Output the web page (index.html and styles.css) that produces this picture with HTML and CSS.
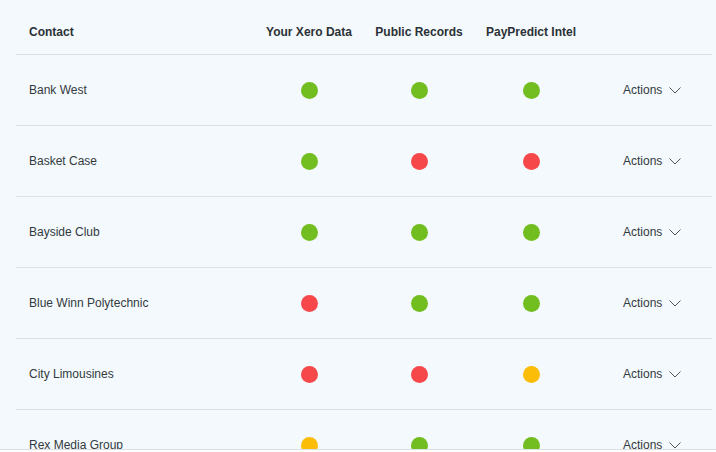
FILE: index.html
```html
<!DOCTYPE html>
<html>
<head>
<meta charset="utf-8">
<link rel="stylesheet" href="styles.css">
</head>
<body>
<div class="frame">
  <div class="table">
    <div class="row head">
      <div class="c-name">Contact</div>
      <div class="c-dot">Your Xero Data</div>
      <div class="c-dot">Public Records</div>
      <div class="c-dot">PayPredict Intel</div>
      <div class="c-act"></div>
    </div>
    <div class="row">
      <div class="c-name">Bank West</div>
      <div class="c-dot"><span class="dot green"></span></div>
      <div class="c-dot"><span class="dot green"></span></div>
      <div class="c-dot"><span class="dot green"></span></div>
      <div class="c-act">Actions <svg class="chev" viewBox="0 0 12 7" width="12" height="7"><path d="M0.5 0.5 L6 6 L11.5 0.5" fill="none" stroke="#555" stroke-width="1"/></svg></div>
    </div>
    <div class="row">
      <div class="c-name">Basket Case</div>
      <div class="c-dot"><span class="dot green"></span></div>
      <div class="c-dot"><span class="dot red"></span></div>
      <div class="c-dot"><span class="dot red"></span></div>
      <div class="c-act">Actions <svg class="chev" viewBox="0 0 12 7" width="12" height="7"><path d="M0.5 0.5 L6 6 L11.5 0.5" fill="none" stroke="#555" stroke-width="1"/></svg></div>
    </div>
    <div class="row">
      <div class="c-name">Bayside Club</div>
      <div class="c-dot"><span class="dot green"></span></div>
      <div class="c-dot"><span class="dot green"></span></div>
      <div class="c-dot"><span class="dot green"></span></div>
      <div class="c-act">Actions <svg class="chev" viewBox="0 0 12 7" width="12" height="7"><path d="M0.5 0.5 L6 6 L11.5 0.5" fill="none" stroke="#555" stroke-width="1"/></svg></div>
    </div>
    <div class="row">
      <div class="c-name">Blue Winn Polytechnic</div>
      <div class="c-dot"><span class="dot red"></span></div>
      <div class="c-dot"><span class="dot green"></span></div>
      <div class="c-dot"><span class="dot green"></span></div>
      <div class="c-act">Actions <svg class="chev" viewBox="0 0 12 7" width="12" height="7"><path d="M0.5 0.5 L6 6 L11.5 0.5" fill="none" stroke="#555" stroke-width="1"/></svg></div>
    </div>
    <div class="row">
      <div class="c-name">City Limousines</div>
      <div class="c-dot"><span class="dot red"></span></div>
      <div class="c-dot"><span class="dot red"></span></div>
      <div class="c-dot"><span class="dot yellow"></span></div>
      <div class="c-act">Actions <svg class="chev" viewBox="0 0 12 7" width="12" height="7"><path d="M0.5 0.5 L6 6 L11.5 0.5" fill="none" stroke="#555" stroke-width="1"/></svg></div>
    </div>
    <div class="row">
      <div class="c-name">Rex Media Group</div>
      <div class="c-dot"><span class="dot yellow"></span></div>
      <div class="c-dot"><span class="dot green"></span></div>
      <div class="c-dot"><span class="dot green"></span></div>
      <div class="c-act">Actions <svg class="chev" viewBox="0 0 12 7" width="12" height="7"><path d="M0.5 0.5 L6 6 L11.5 0.5" fill="none" stroke="#555" stroke-width="1"/></svg></div>
    </div>
  </div>
</div>
</body>
</html>
```
FILE: styles.css
```css
html, body {
  margin: 0;
  padding: 0;
  background: #ffffff;
}
body {
  font-family: "Liberation Sans", Arial, sans-serif;
  color: #333a40;
}
.frame {
  height: 449px;
  overflow: hidden;
  background: #f3f9fc;
  border-bottom: 1px solid #d9dfe3;
}
.table {
  margin-left: 16px;
  width: 696px;
  padding-top: 9px;
}
.row {
  display: grid;
  grid-template-columns: 230px 100px 120px 104px 1fr;
  align-items: center;
  padding-left: 13px;
  height: 70px;
  border-bottom: 1px solid #dae3e9;
  font-size: 12px;
}
.row.head {
  height: 44px;
  font-weight: bold;
  color: #2b3136;
  padding-top: 1px;
}
.c-dot {
  display: flex;
  justify-content: center;
  white-space: nowrap;
}
.c-act {
  padding-left: 40px;
  display: flex;
  align-items: center;
  gap: 7px;
  white-space: nowrap;
}
.chev {
  display: block;
}
.dot {
  display: block;
  width: 17px;
  height: 17px;
  border-radius: 50%;
}
.green { background: #72bd1f; }
.red { background: #f6484b; }
.yellow { background: #fbbd08; }
```
